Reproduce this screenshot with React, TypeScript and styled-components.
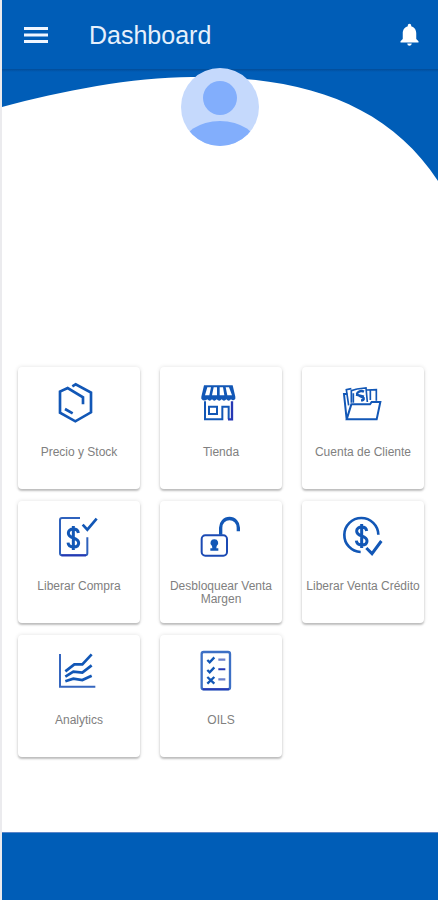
import React from "react";
import styled, { createGlobalStyle } from "styled-components";
import { MdNotifications } from "react-icons/md";

const BLUE = "#005db7";
const INK = "#1257b6";
const INDIGO = "#2638b4";

const GlobalStyle = createGlobalStyle`
  * { box-sizing: border-box; }
  body {
    margin: 0;
    background: #ffffff;
    font-family: "Liberation Sans", Arial, sans-serif;
  }
`;

const Page = styled.div`
  min-height: 100vh;
  display: flex;
  flex-direction: column;
  border-left: 2px solid #ebebee;
`;

const TopBar = styled.header`
  height: 69px;
  padding: 0 15px 0 18px;
  display: flex;
  align-items: center;
  background: ${BLUE};
  color: #ffffff;
`;

const IconButton = styled.button<{ $size: number }>`
  display: flex;
  padding: 0;
  border: 0;
  background: none;
  color: inherit;
  font-size: ${(p) => p.$size}px;
  cursor: pointer;
`;

const MenuGlyph = styled.svg`
  width: 32px;
  height: 32px;
  stroke: #f0f6ff;
  stroke-width: 3;
`;

const Title = styled.h1`
  flex: 1;
  margin: 0 0 0 37px;
  font-size: 25px;
  line-height: 28px;
  font-weight: 400;
  color: #e6f0fc;
`;

const Main = styled.main`
  flex: 1;
  display: flex;
  flex-direction: column;
`;

const Hero = styled.section`
  display: grid;
  justify-items: center;
  align-items: start;
  > * { grid-area: 1 / 1; }
`;

const Wave = styled.svg`
  display: block;
  width: 100%;
  height: 114px;
  background: linear-gradient(#034c98, ${BLUE} 3px);
`;

const Avatar = styled.svg`
  width: 78px;
  height: 78px;
  margin-top: -1px;
`;

const Tiles = styled.nav`
  margin: 184px 14px 75px 16px;
  display: grid;
  grid-template-columns: repeat(3, 1fr);
  gap: 12px 20px;
`;

const Tile = styled.button`
  min-height: 122px;
  padding: 15px 0 12px;
  display: flex;
  flex-direction: column;
  align-items: center;
  gap: 22px;
  border: 0;
  border-radius: 4px;
  background: #ffffff;
  box-shadow: 0 2px 2px rgba(0, 0, 0, 0.22), 0 0 4px rgba(0, 0, 0, 0.12);
  color: #808080;
  font-family: inherit;
  font-size: 12px;
  line-height: 13px;
  text-align: center;
  cursor: pointer;
`;

const Glyph = styled.svg`
  flex: none;
  width: 42px;
  height: 42px;
  fill: none;
  stroke: ${INK};
  stroke-width: 8;
`;

const Footer = styled.footer`
  height: 68px;
  background: ${BLUE};
  border-top: 1px solid #5c86c8;
`;

const Dollar = ({ x, y }: { x: number; y: number }) => (
  <path
    transform={`translate(${x} ${y})`}
    strokeWidth="9"
    d="M0-36V36M15-15C14-24 7-27 0-27C-9-27-15-22-15-15C-15-6-8-3 0 0C9 3 16 7 16 15C16 23 9 27 0 27C-9 27-15 23-16 14"
  />
);

const BoxIcon = () => (
  <path d="M43 13 53 7 99 32V91L52 118 6 92V29L29 18 75 46V67M21 81 44 94" />
);

const StoreIcon = () => (
  <>
    <path
      fill={INK}
      stroke="none"
      d="M12 10H98L106 44V50Q100 59 93 52Q86 60 79 52Q72 60 65 52Q58 60 50 52Q43 60 36 52Q29 60 22 52Q11 60 4 50V44Z"
    />
    <path
      fill="#ffffff"
      stroke="none"
      d="M22 16H33L28 40H15ZM41 16H51V40H36ZM59 16H69L73 40H59ZM77 16H87L96 40H82Z"
    />
    <path strokeWidth="6" d="M15 58V112H67V74H86V112" />
    <path strokeWidth="6" d="M27 74H51V96H27Z" />
    <path stroke={INDIGO} strokeWidth="7" d="M96 58V112H84" />
  </>
);

const FolderIcon = () => (
  <>
    <path strokeWidth="6" d="M14 112 28 67H84L89 60H115L104 112ZM14 112 6 36H16" />
    <path strokeWidth="5" d="M20 70 13 23 28 20M28 62V26L45 21M45 21 72 18 76 60M75 24 103 23V56M85 54V26M34 34V62" />
    <path strokeWidth="7" d="M66 29Q56 24 47 32Q41 38 53 42L65 48Q67 55 57 55M42 38 66 44" />
  </>
);

const InvoiceCheckIcon = () => (
  <>
    <path strokeWidth="6" stroke="#2f62bd" d="M66 6H12Q6 6 6 12V112Q6 118 12 118H82Q88 118 88 112V64" />
    <path strokeWidth="6" stroke={INDIGO} d="M10 118H84" />
    <path d="M74 26 88 41 116 8" />
    <Dollar x={46} y={66} />
  </>
);

const UnlockIcon = () => (
  <>
    <rect x="5" y="58" width="76" height="61" rx="11" strokeWidth="6" stroke="#1b4ab4" />
    <path strokeWidth="10" d="M62 56V35A26 27 0 0 1 115 35V46" />
    <path
      fill={INK}
      stroke="none"
      d="M43 70A11 11 0 0 1 50 90L49 97H55V104H31V97H37L36 90A11 11 0 0 1 43 70Z"
    />
  </>
);

const CreditCheckIcon = () => (
  <>
    <path d="M56 108A51 51 0 1 1 109 56" />
    <path strokeWidth="9" d="M73 96 90 113 118 75" />
    <Dollar x={59} y={60} />
  </>
);

const ChartIcon = () => (
  <>
    <path strokeWidth="6" stroke="#3566bf" d="M6 12V110H112" />
    <path d="M22 64 49 43H73L101 13M22 80 46 65 73 68 101 46M22 94 46 86 73 90 101 77" />
  </>
);

const ChecklistIcon = () => (
  <>
    <rect x="5" y="6" width="85" height="112" rx="6" strokeWidth="7" stroke="#3d70c5" />
    <path stroke={INDIGO} strokeWidth="6" d="M8 118H87M55 58H76" />
    <path stroke="#6a7fca" strokeWidth="7" d="M55 29H76M55 88H76" />
    <path strokeWidth="7" d="M22 30 29 37 43 22M22 60 29 67 43 52M22 81 43 101M43 81 22 101" />
  </>
);

const tiles = [
  { label: "Precio y Stock", Icon: BoxIcon },
  { label: "Tienda", Icon: StoreIcon },
  { label: "Cuenta de Cliente", Icon: FolderIcon },
  { label: "Liberar Compra", Icon: InvoiceCheckIcon },
  { label: "Desbloquear Venta Margen", Icon: UnlockIcon },
  { label: "Liberar Venta Crédito", Icon: CreditCheckIcon },
  { label: "Analytics", Icon: ChartIcon },
  { label: "OILS", Icon: ChecklistIcon },
];

export default function App() {
  return (
    <Page>
      <GlobalStyle />
      <TopBar>
        <IconButton $size={32} aria-label="Menú">
          <MenuGlyph viewBox="0 0 32 32" aria-hidden="true">
            <path d="M4 9.5H28M4 16H28M4 22.5H28" />
          </MenuGlyph>
        </IconButton>
        <Title>Dashboard</Title>
        <IconButton $size={27} aria-label="Notificaciones">
          <MdNotifications />
        </IconButton>
      </TopBar>
      <Main>
        <Hero>
          <Wave viewBox="0 0 436 114" preserveAspectRatio="none" aria-hidden="true">
            <path fill="#ffffff" d="M0 38C60 22 130 8 190 8C300 7 385 34 436 112V114H0Z" />
          </Wave>
          <Avatar viewBox="0 0 78 78" role="img" aria-label="Usuario">
            <clipPath id="avatar-disc">
              <circle cx="39" cy="39" r="39" />
            </clipPath>
            <g clipPath="url(#avatar-disc)">
              <rect width="78" height="78" fill="#c5d9fc" />
              <circle cx="39" cy="30" r="17" fill="#82aefc" />
              <ellipse cx="39" cy="79" rx="38" ry="26" fill="#82aefc" />
            </g>
          </Avatar>
        </Hero>
        <Tiles aria-label="Secciones">
          {tiles.map(({ label, Icon }) => (
            <Tile key={label}>
              <Glyph viewBox="0 0 126 126" aria-hidden="true">
                <Icon />
              </Glyph>
              <span>{label}</span>
            </Tile>
          ))}
        </Tiles>
      </Main>
      <Footer />
    </Page>
  );
}
